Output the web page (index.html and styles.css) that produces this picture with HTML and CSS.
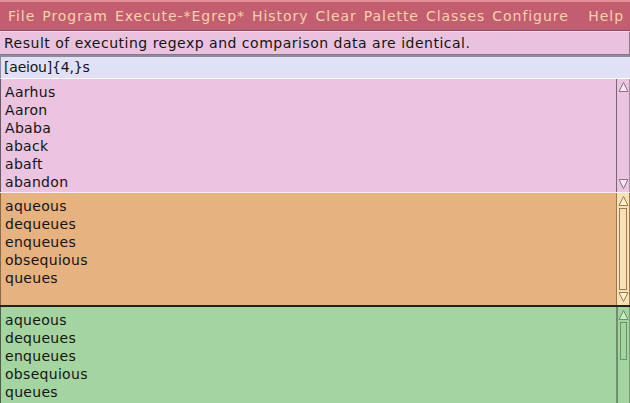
FILE: index.html
```html
<!DOCTYPE html>
<html>
<head>
<meta charset="utf-8">
<link rel="stylesheet" href="styles.css">
</head>
<body>
<div class="app">
  <div class="menubar">
    <span class="mi">File</span>
    <span class="mi">Program</span>
    <span class="mi">Execute-*Egrep*</span>
    <span class="mi">History</span>
    <span class="mi">Clear</span>
    <span class="mi">Palette</span>
    <span class="mi">Classes</span>
    <span class="mi">Configure</span>
    <span class="mi help">Help</span>
  </div>
  <div class="status">Result of executing regexp and comparison data are identical.</div>
  <div class="entry">[aeiou]{4,}s</div>
  <div class="pane p1">
    <div class="list">
      <div>Aarhus</div><div>Aaron</div><div>Ababa</div><div>aback</div><div>abaft</div><div>abandon</div>
    </div>
    <div class="sb">
      <svg class="arr" viewBox="0 0 11 12" width="11" height="12"><path d="M5.5 1.5 L1 10.5 L10 10.5 Z" fill="#f4eaf0" stroke="#8a7088" stroke-width="1"/></svg>
      <div class="track"></div>
      <svg class="arr" viewBox="0 0 11 12" width="11" height="12"><path d="M5.5 10.5 L1 1.5 L10 1.5 Z" fill="#f4eaf0" stroke="#8a7088" stroke-width="1"/></svg>
    </div>
  </div>
  <div class="pane p2">
    <div class="list">
      <div>aqueous</div><div>dequeues</div><div>enqueues</div><div>obsequious</div><div>queues</div>
    </div>
    <div class="sb">
      <svg class="arr" viewBox="0 0 11 12" width="11" height="12"><path d="M5.5 1.5 L1 10.5 L10 10.5 Z" fill="#fcf0d0" stroke="#a07850" stroke-width="1"/></svg>
      <div class="track"><div class="thumb full"></div></div>
      <svg class="arr" viewBox="0 0 11 12" width="11" height="12"><path d="M5.5 10.5 L1 1.5 L10 1.5 Z" fill="#fcf0d0" stroke="#a07850" stroke-width="1"/></svg>
    </div>
  </div>
  <div class="pane p3">
    <div class="list">
      <div>aqueous</div><div>dequeues</div><div>enqueues</div><div>obsequious</div><div>queues</div>
    </div>
    <div class="sb">
      <svg class="arr" viewBox="0 0 11 12" width="11" height="12"><path d="M5.5 1.5 L1 10.5 L10 10.5 Z" fill="#c8ecc4" stroke="#6e8e6c" stroke-width="1"/></svg>
      <div class="track"><div class="thumb part"></div></div>
    </div>
  </div>
</div>
</body>
</html>
```
FILE: styles.css
```css
html, body {
  margin: 0;
  padding: 0;
}
body {
  width: 630px;
  height: 403px;
  overflow: hidden;
  font-family: "DejaVu Sans", "Liberation Sans", sans-serif;
  font-size: 14px;
  color: #141414;
}
.app {
  display: flex;
  flex-direction: column;
  width: 630px;
  height: 403px;
}
.menubar {
  box-sizing: border-box;
  height: 31px;
  flex: none;
  background: #c25e70;
  border-top: 2px solid #e48e9a;
  border-bottom: 1px solid #9e4858;
  display: flex;
  align-items: center;
  padding: 0 6px 1px 8px;
  gap: 7px;
  color: #f8d2a8;
  font-size: 14px;
  letter-spacing: 0.95px;
  white-space: nowrap;
}
.mi {
  flex: none;
}
.mi.help {
  margin-left: auto;
}
.status {
  box-sizing: border-box;
  height: 24px;
  flex: none;
  background: #e9c3dd;
  border-top: 1px solid #f6e6f0;
  border-bottom: 1px solid #8a7888;
  border-right: 1px solid #8a7888;
  padding-left: 4px;
  line-height: 22px;
  letter-spacing: 0.5px;
}
.entry {
  box-sizing: border-box;
  height: 24px;
  flex: none;
  background: #e0e0f6;
  border-top: 2px solid #8c8c9c;
  border-bottom: 1px solid #ffffff;
  border-left: 1px solid #8c8c9c;
  padding-left: 3px;
  line-height: 21px;
  letter-spacing: -0.2px;
}
.pane {
  display: flex;
  box-sizing: border-box;
  flex: none;
}
.list {
  flex: 1;
  padding: 4px 0 0 4px;
  line-height: 18px;
  letter-spacing: 0.3px;
  border-left: 1px solid #6a5a68;
}
.sb {
  width: 14px;
  box-sizing: border-box;
  display: flex;
  flex-direction: column;
  align-items: center;
  padding: 2px 0;
}
.arr {
  display: block;
  flex: none;
}
.track {
  flex: 1;
  width: 100%;
  box-sizing: border-box;
  padding: 1px 2px;
}
.thumb {
  box-sizing: border-box;
  width: 100%;
}
.p1 {
  height: 114px;
  background: #ebc4df;
  border-bottom: 1px solid #fbf0f6;
}
.p1 .sb {
  border-left: 1px solid #7a6478;
  border-right: 1px solid #a88aa4;
  background: #ebc4df;
}
.p2 {
  height: 114px;
  background: #e6b27f;
  border-bottom: 2px solid #2a2018;
}
.p2 .list {
  border-left-color: #8a6a48;
}
.p2 .sb {
  background: #f6e2b4;
  border-left: 1px solid #a07850;
  border-right: 1px solid #a07850;
}
.thumb.full {
  height: 100%;
  border: 1px solid #a07850;
  background: #f6e2b4;
}
.p3 {
  flex: 1;
  background: #a4d4a0;
}
.p3 .list {
  border-left-color: #4a6048;
}
.p3 .sb {
  background: #a4d4a0;
  border-left: 2px solid #6e8e6c;
  border-right: 1px solid #7a9a78;
}
.thumb.part {
  height: 38px;
  border: 1px solid #6e8e6c;
  background: #a4d4a0;
}
```
